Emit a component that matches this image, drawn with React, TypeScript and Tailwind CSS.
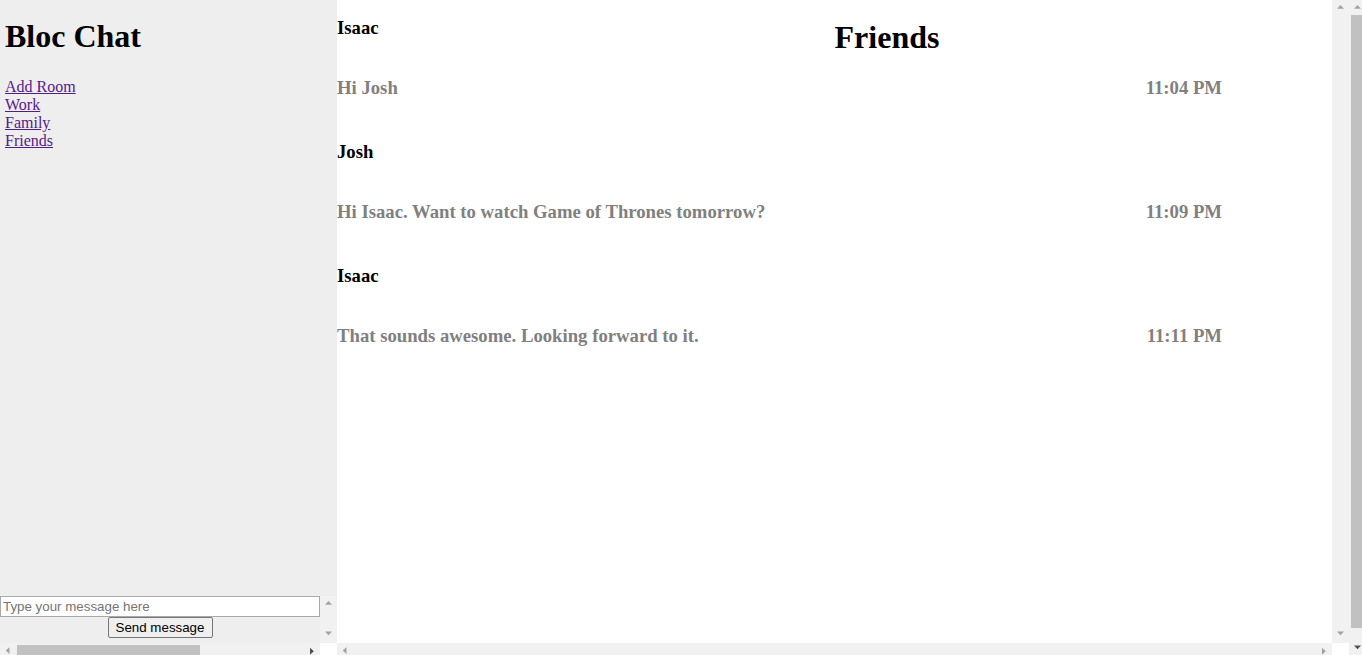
import React from 'react';

type Dir = 'up' | 'down' | 'left' | 'right';

const arrowPoints: Record<Dir, string> = {
  up: '5,8.8 8.5,5 12,8.8',
  down: '5,5.5 12,5.5 8.5,9.3',
  left: '5.7,7.6 9.5,4.3 9.5,10.9',
  right: '7,4.8 10.8,8.3 7,11.8'
};

function Arrow({ dir, dark = false }: { dir: Dir; dark?: boolean }) {
  return <svg width="17" height="17" viewBox="0 0 17 17" className="block shrink-0">
      <polygon points={arrowPoints[dir]} fill={dark ? '#505050' : '#a3a3a3'} />
    </svg>;
}

const rooms = ['Add Room', 'Work', 'Family', 'Friends'];

const messages = [{
  user: 'Isaac',
  content: 'Hi Josh',
  sentAt: '11:04 PM'
}, {
  user: 'Josh',
  content: 'Hi Isaac. Want to watch Game of Thrones tomorrow?',
  sentAt: '11:09 PM'
}, {
  user: 'Isaac',
  content: 'That sounds awesome. Looking forward to it.',
  sentAt: '11:11 PM'
}];

export default function App() {
  return <div className="flex h-[655px] w-[1362px] overflow-hidden bg-white font-['Liberation_Serif',serif] text-black">
      {/* Sidebar */}
      <aside className="flex w-[337px] shrink-0 flex-col">
        <div className="flex h-[596px] shrink-0 flex-col bg-[#eeeeee] pl-[5px]">
          <h1 className="pt-[18px] text-[32px] font-bold leading-[37px]">Bloc Chat</h1>
          <ul className="mt-[23px] text-[16px] leading-[18px]">
            {rooms.map(room => <li key={room}>
                <a href="#" className="text-[#551a8b] underline">{room}</a>
              </li>)}
          </ul>
        </div>

        <div className="flex h-[47px] shrink-0">
          <form className="flex w-[320px] flex-col items-center bg-[#eeeeee] font-['Liberation_Sans',Arial,sans-serif] text-[13.33px]" onSubmit={e => e.preventDefault()}>
            <input type="text" placeholder="Type your message here" className="box-border h-[21px] w-[320px] border border-[#a9a9a9] bg-white px-[2px] py-[1px] text-black outline-none placeholder:text-[#757575]" />
            <button type="submit" className="box-border h-[21px] w-[105px] rounded-[2px] border border-[#767676] bg-[#efefef] leading-[15px] text-black">
              Send message
            </button>
          </form>
          <div className="flex w-[17px] flex-col justify-between bg-[#f1f1f1]">
            <Arrow dir="up" />
            <Arrow dir="down" />
          </div>
        </div>

        <div className="flex h-[17px] shrink-0">
          <div className="flex w-[320px] items-start bg-[#f1f1f1]">
            <Arrow dir="left" />
            <div className="mt-[2px] h-[13px] w-[183px] bg-[#c1c1c1]" />
            <div className="flex-1" />
            <Arrow dir="right" dark />
          </div>
          <div className="w-[17px] bg-white" />
        </div>
      </aside>

      {/* Chat room */}
      <main className="flex w-[995px] shrink-0 flex-col">
        <div className="h-[643px] shrink-0 overflow-hidden bg-white">
          <div className="grid w-[1100px]">
            <h1 className="col-start-1 row-start-1 pt-[19px] text-center text-[32px] font-bold leading-[37px]">
              Friends
            </h1>
            <div className="col-start-1 row-start-1 flex flex-col pt-[17px] text-[18.72px] font-bold leading-[22px]">
              {messages.map((message, i) => <div key={i} className="pb-[42px]">
                  <h3>{message.user}</h3>
                  <div className="mt-[38px] flex w-[885px] justify-between text-[#808080]">
                    <span>{message.content}</span>
                    <span>{message.sentAt}</span>
                  </div>
                </div>)}
            </div>
          </div>
        </div>
        <div className="flex h-[17px] shrink-0 justify-between bg-[#f1f1f1]">
          <Arrow dir="left" />
          <Arrow dir="right" />
        </div>
      </main>

      {/* Room scrollbar */}
      <div className="flex w-[17px] shrink-0 flex-col">
        <div className="flex h-[643px] shrink-0 flex-col justify-between bg-[#f1f1f1]">
          <Arrow dir="up" />
          <Arrow dir="down" />
        </div>
        <div className="h-[17px] shrink-0 bg-white" />
      </div>

      {/* Page scrollbar */}
      <div className="flex w-[17px] shrink-0 flex-col bg-[#f1f1f1]">
        <div className="h-[15px] shrink-0 overflow-hidden">
          <Arrow dir="up" />
        </div>
        <div className="ml-[2px] h-[613px] w-[13px] shrink-0 bg-[#c1c1c1]" />
        <div className="flex-1" />
        <div className="h-[14px] shrink-0 overflow-hidden">
          <div className="-mt-[1px]">
            <Arrow dir="down" dark />
          </div>
        </div>
      </div>
    </div>;
}
